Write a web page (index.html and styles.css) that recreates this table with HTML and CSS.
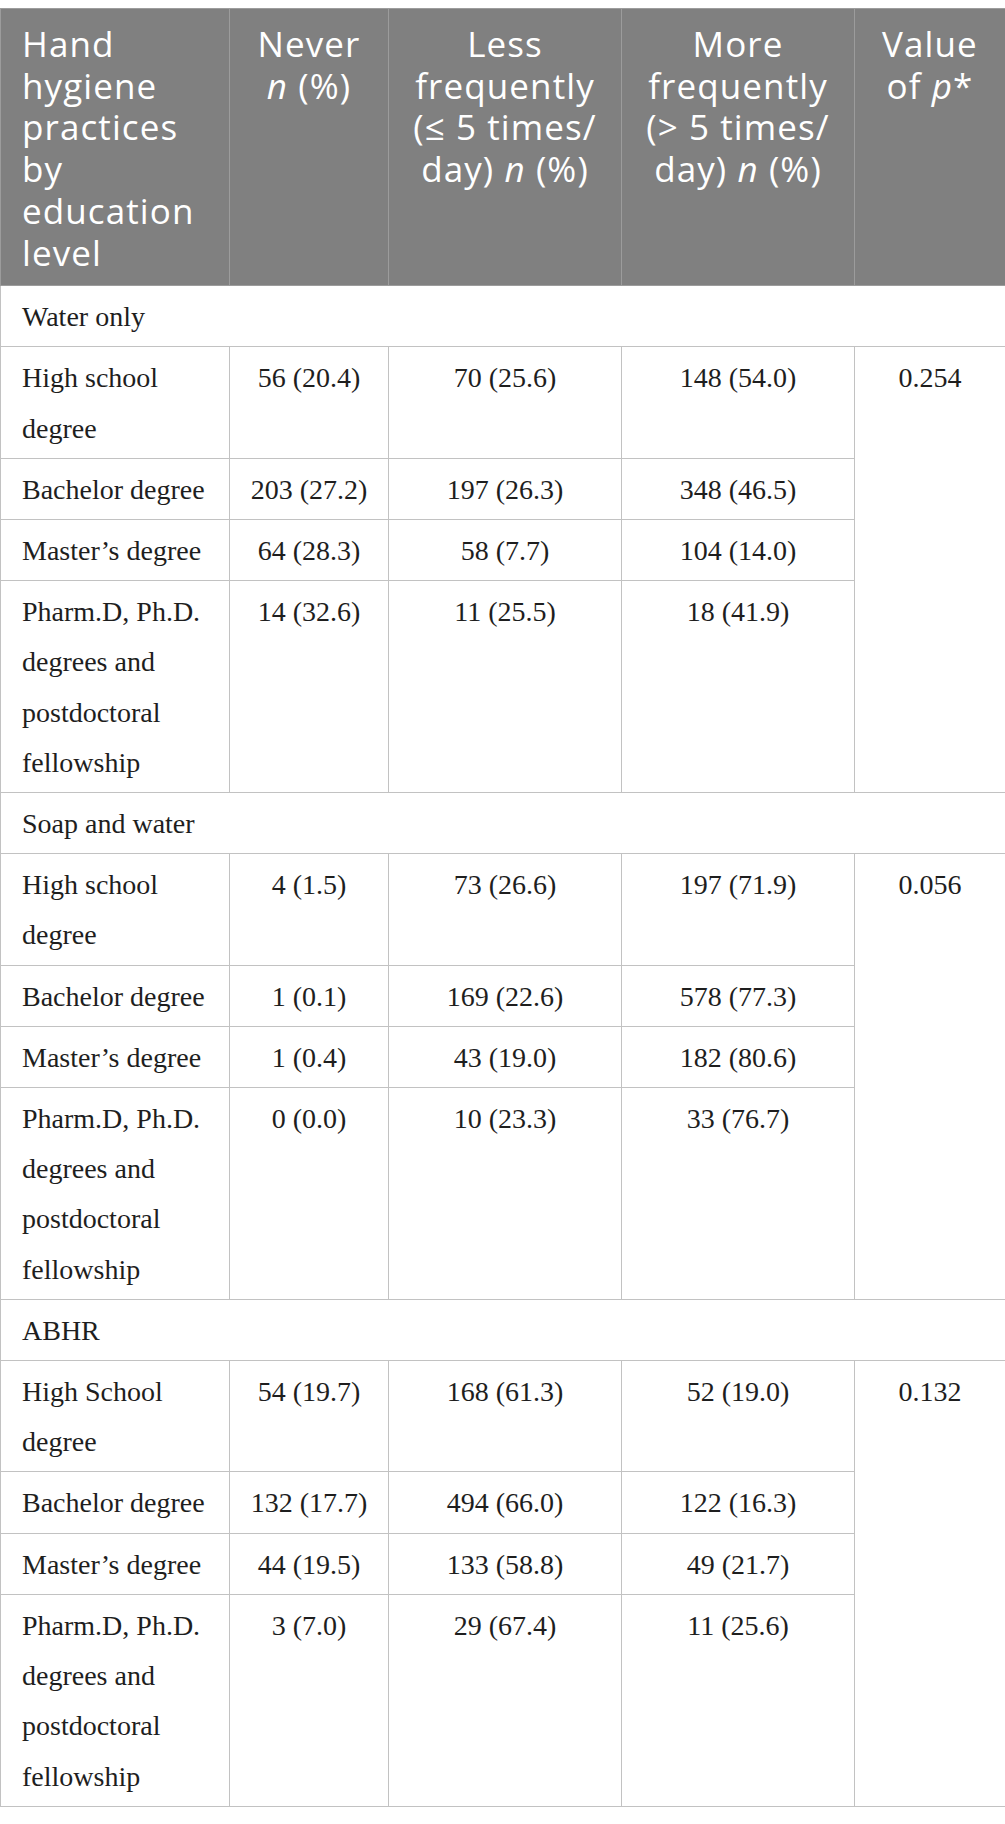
FILE: index.html
```html
<!DOCTYPE html>
<html lang="en">
<head>
<meta charset="utf-8">
<title>Hand hygiene practices by education level</title>
<link rel="stylesheet" href="styles.css">
</head>
<body>
<table class="tbl">
  <colgroup>
    <col class="c1"><col class="c2"><col class="c3"><col class="c4"><col class="c5">
  </colgroup>
  <thead>
    <tr>
      <th class="first">Hand hygiene practices by education level</th>
      <th>Never <i>n</i> (%)</th>
      <th>Less frequently (≤ 5 times/ day) <i>n</i> (%)</th>
      <th>More frequently (&gt; 5 times/ day) <i>n</i> (%)</th>
      <th>Value of <i>p</i>*</th>
    </tr>
  </thead>
  <tbody>
    <tr><td class="section" colspan="5">Water only</td></tr>
    <tr><td class="first">High school degree</td><td>56 (20.4)</td><td>70 (25.6)</td><td>148 (54.0)</td><td rowspan="4">0.254</td></tr>
    <tr><td class="first">Bachelor degree</td><td>203 (27.2)</td><td>197 (26.3)</td><td>348 (46.5)</td></tr>
    <tr><td class="first">Master’s degree</td><td>64 (28.3)</td><td>58 (7.7)</td><td>104 (14.0)</td></tr>
    <tr><td class="first">Pharm.D, Ph.D. degrees and postdoctoral fellowship</td><td>14 (32.6)</td><td>11 (25.5)</td><td>18 (41.9)</td></tr>

    <tr><td class="section" colspan="5">Soap and water</td></tr>
    <tr><td class="first">High school degree</td><td>4 (1.5)</td><td>73 (26.6)</td><td>197 (71.9)</td><td rowspan="4">0.056</td></tr>
    <tr><td class="first">Bachelor degree</td><td>1 (0.1)</td><td>169 (22.6)</td><td>578 (77.3)</td></tr>
    <tr><td class="first">Master’s degree</td><td>1 (0.4)</td><td>43 (19.0)</td><td>182 (80.6)</td></tr>
    <tr><td class="first">Pharm.D, Ph.D. degrees and postdoctoral fellowship</td><td>0 (0.0)</td><td>10 (23.3)</td><td>33 (76.7)</td></tr>

    <tr><td class="section" colspan="5">ABHR</td></tr>
    <tr><td class="first">High School degree</td><td>54 (19.7)</td><td>168 (61.3)</td><td>52 (19.0)</td><td rowspan="4">0.132</td></tr>
    <tr><td class="first">Bachelor degree</td><td>132 (17.7)</td><td>494 (66.0)</td><td>122 (16.3)</td></tr>
    <tr><td class="first">Master’s degree</td><td>44 (19.5)</td><td>133 (58.8)</td><td>49 (21.7)</td></tr>
    <tr><td class="first">Pharm.D, Ph.D. degrees and postdoctoral fellowship</td><td>3 (7.0)</td><td>29 (67.4)</td><td>11 (25.6)</td></tr>
  </tbody>
</table>
</body>
</html>
```
FILE: styles.css
```css
html, body {
  margin: 0;
  padding: 0;
  background: #ffffff;
}
body {
  padding-top: 8px;
}
.tbl {
  border-collapse: collapse;
  table-layout: fixed;
  width: 1005px;
}
.c1 { width: 229px; }
.c2 { width: 159px; }
.c3 { width: 233px; }
.c4 { width: 233px; }
.c5 { width: 151px; }

.tbl th {
  background: #808080;
  color: #ffffff;
  font-family: "Open Sans", "DejaVu Sans", sans-serif;
  font-weight: 400;
  font-size: 35px;
  line-height: 41.7px;
  letter-spacing: 1.1px;
  text-align: center;
  vertical-align: top;
  padding: 14px 18px 12px 18px;
  border: 1px solid #9c9c9c;
}
.tbl th.first {
  text-align: left;
  padding-left: 21px;
}
.tbl td {
  font-family: "Liberation Serif", "Times New Roman", serif;
  font-size: 28px;
  line-height: 50.2px;
  color: #1e1e1e;
  text-align: center;
  vertical-align: top;
  padding: 6px 20px 4px 20px;
  border: 1px solid #c2c2c2;
}
.tbl td.first {
  text-align: left;
  padding-left: 21px;
  padding-right: 14px;
}
.tbl td.section {
  text-align: left;
  padding-left: 21px;
}
```
